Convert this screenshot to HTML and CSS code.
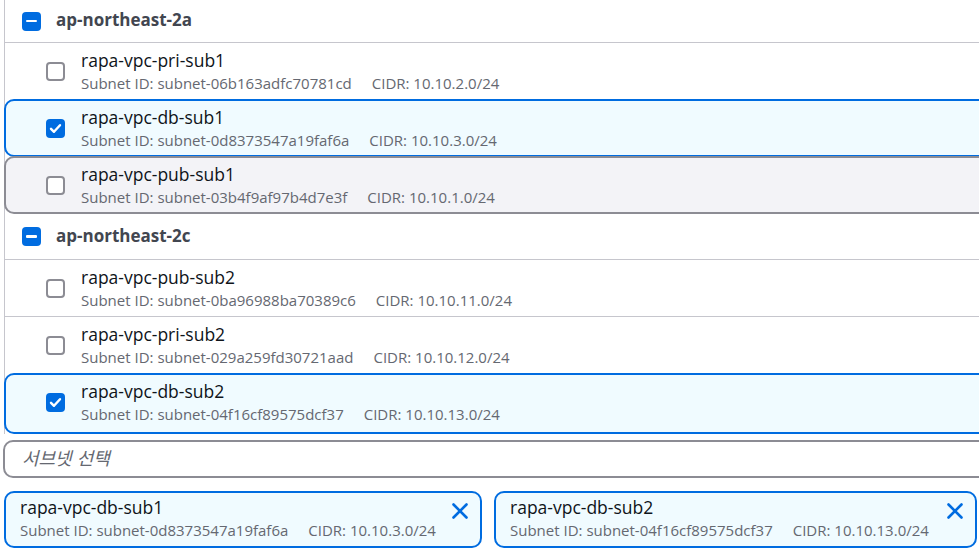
FILE: index.html
```html
<!DOCTYPE html>
<html lang="ko">
<head>
<meta charset="utf-8">
<title>Subnets</title>
<link rel="stylesheet" href="styles.css">
</head>
<body>
<div class="page">
  <div class="list">
    <div class="group">
      <span class="cb cb-mixed"><span class="dash"></span></span>
      <span class="group-label">ap-northeast-2a</span>
    </div>
    <div class="option sep-none">
      <span class="cb"></span>
      <div class="txt">
        <div class="title">rapa-vpc-pri-sub1</div>
        <div class="meta"><span>Subnet ID: subnet-06b163adfc70781cd</span><span>CIDR: 10.10.2.0/24</span></div>
      </div>
    </div>
    <div class="option selected">
      <span class="cb cb-on"><svg viewBox="0 0 19 19" width="19" height="19"><path d="M5 9.8l3 3 6-6.6" fill="none" stroke="#fff" stroke-width="2.4" stroke-linecap="round" stroke-linejoin="round"/></svg></span>
      <div class="txt">
        <div class="title">rapa-vpc-db-sub1</div>
        <div class="meta"><span>Subnet ID: subnet-0d8373547a19faf6a</span><span>CIDR: 10.10.3.0/24</span></div>
      </div>
    </div>
    <div class="option hovered">
      <span class="cb"></span>
      <div class="txt">
        <div class="title">rapa-vpc-pub-sub1</div>
        <div class="meta"><span>Subnet ID: subnet-03b4f9af97b4d7e3f</span><span>CIDR: 10.10.1.0/24</span></div>
      </div>
    </div>
    <div class="group group2">
      <span class="cb cb-mixed"><span class="dash"></span></span>
      <span class="group-label">ap-northeast-2c</span>
    </div>
    <div class="option sep">
      <span class="cb"></span>
      <div class="txt">
        <div class="title">rapa-vpc-pub-sub2</div>
        <div class="meta"><span>Subnet ID: subnet-0ba96988ba70389c6</span><span>CIDR: 10.10.11.0/24</span></div>
      </div>
    </div>
    <div class="option">
      <span class="cb"></span>
      <div class="txt">
        <div class="title">rapa-vpc-pri-sub2</div>
        <div class="meta"><span>Subnet ID: subnet-029a259fd30721aad</span><span>CIDR: 10.10.12.0/24</span></div>
      </div>
    </div>
    <div class="option selected last">
      <span class="cb cb-on"><svg viewBox="0 0 19 19" width="19" height="19"><path d="M5 9.8l3 3 6-6.6" fill="none" stroke="#fff" stroke-width="2.4" stroke-linecap="round" stroke-linejoin="round"/></svg></span>
      <div class="txt">
        <div class="title">rapa-vpc-db-sub2</div>
        <div class="meta"><span>Subnet ID: subnet-04f16cf89575dcf37</span><span>CIDR: 10.10.13.0/24</span></div>
      </div>
    </div>
  </div>

  <div class="input"><span class="placeholder">서브넷 선택</span></div>

  <div class="tokens">
    <div class="token t1">
      <div class="txt">
        <div class="title">rapa-vpc-db-sub1</div>
        <div class="meta"><span>Subnet ID: subnet-0d8373547a19faf6a</span><span>CIDR: 10.10.3.0/24</span></div>
      </div>
      <svg class="x" viewBox="0 0 16 16" width="16" height="16"><path d="M1.5 1.5l13 13M14.5 1.5l-13 13" stroke="#006ce0" stroke-width="2.6" stroke-linecap="round" fill="none"/></svg>
    </div>
    <div class="token t2">
      <div class="txt">
        <div class="title">rapa-vpc-db-sub2</div>
        <div class="meta"><span>Subnet ID: subnet-04f16cf89575dcf37</span><span>CIDR: 10.10.13.0/24</span></div>
      </div>
      <svg class="x" viewBox="0 0 16 16" width="16" height="16"><path d="M1.5 1.5l13 13M14.5 1.5l-13 13" stroke="#006ce0" stroke-width="2.6" stroke-linecap="round" fill="none"/></svg>
    </div>
  </div>
</div>
</body>
</html>
```

FILE: styles.css
```css
html, body {
  margin: 0;
  padding: 0;
  background: #ffffff;
  overflow: hidden;
}
body {
  width: 979px;
  height: 554px;
  font-family: "Open Sans", "Noto Sans", "Noto Sans CJK KR", sans-serif;
  color: #0f141a;
}
.page {
  width: 1010px;
}
.list {
  margin-left: 4px;
  border-left: 1px solid #c6c6cd;
  display: flex;
  flex-direction: column;
}
.group {
  display: flex;
  align-items: center;
  height: 42px;
  padding-left: 17px;
  border-bottom: 1px solid #c6c6cd;
  box-sizing: content-box;
}
.group2 {
  height: 45px;
}
.group-label {
  margin-left: 15px;
  font-weight: 700;
  font-size: 17px;
  line-height: 22px;
  color: #424650;
  position: relative;
  top: -1px;
}
.cb {
  box-sizing: border-box;
  width: 19px;
  height: 19px;
  border: 2px solid #8c8c94;
  border-radius: 4px;
  background: #fff;
  flex: none;
  display: flex;
  align-items: center;
  justify-content: center;
}
.cb-on, .cb-mixed {
  border: none;
  background: #006ce0;
}
.cb svg {
  display: block;
}
.dash {
  width: 11px;
  height: 2.5px;
  background: #fff;
  border-radius: 1px;
}
.option {
  display: flex;
  align-items: center;
  height: 56px;
  padding-left: 41px;
  box-sizing: border-box;
}
.option .txt {
  margin-left: 16px;
  position: relative;
  top: 1px;
}
.option.sep {
  height: 57px;
  border-bottom: 1px solid #c6c6cd;
}
.option.selected, .option.hovered {
  margin-left: -1px;
  padding-left: 40px;
  border: 2px solid #006ce0;
  border-radius: 10px;
  background: #f0fbff;
  height: 58px;
}
.option.hovered {
  margin-top: -1px;
  border-color: #8c8c94;
  background: #f3f3f7;
}
.option.last {
  height: 61px;
  padding-bottom: 3px;
}
.title {
  font-size: 17.5px;
  line-height: 22px;
  color: #0f141a;
  white-space: nowrap;
}
.meta {
  font-size: 15px;
  line-height: 24px;
  color: #656871;
  white-space: nowrap;
  display: flex;
  gap: 20px;
}
.input {
  margin-top: 6px;
  margin-left: 3px;
  height: 38px;
  box-sizing: border-box;
  border: 2px solid #8c8c94;
  border-radius: 10px;
  display: flex;
  align-items: center;
  padding-left: 17px;
}
.placeholder {
  font-family: "Noto Sans CJK KR", "Open Sans", sans-serif;
  font-style: italic;
  font-size: 18px;
  color: #656871;
  line-height: 22px;
  position: relative;
  top: -2px;
}
.tokens {
  margin-top: 13px;
  margin-left: 4px;
  display: grid;
  grid-template-columns: 478px 483px;
  column-gap: 12px;
}
.token {
  box-sizing: border-box;
  height: 57px;
  border: 2px solid #006ce0;
  border-radius: 10px;
  background: #f0fbff;
  display: flex;
  align-items: center;
  justify-content: space-between;
  padding: 0 12px 0 14px;
}
.token .txt {
  position: relative;
  top: -1px;
}
.token .x {
  align-self: flex-start;
  margin-top: 10px;
  flex: none;
}
```
